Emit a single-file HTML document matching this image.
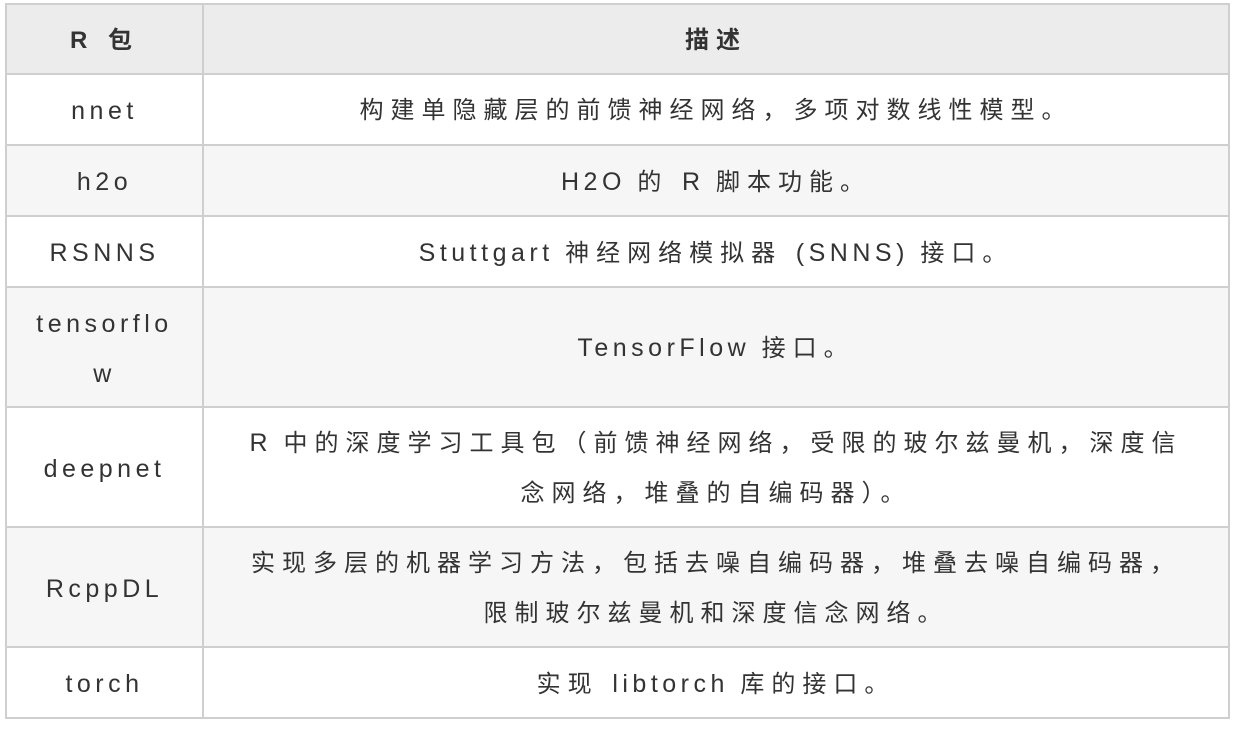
<!DOCTYPE html>
<html><head><meta charset="utf-8"><style>
html,body{margin:0;padding:0;background:#fff;width:1244px;height:734px;overflow:hidden}
table{position:absolute;left:5px;top:3px;border-collapse:collapse;table-layout:fixed;width:1225px;
font-family:"Liberation Sans","Noto Sans CJK SC",sans-serif;font-size:24px;color:#333;letter-spacing:7px}
td,th{border:2px solid #cfcfcf;text-align:center;vertical-align:middle;padding:3px 2px 0;line-height:50px;white-space:nowrap}
th{background:#ececec;font-weight:bold;height:65px}
tr.a td{background:#f6f6f6}
tr.s td{height:66px}
tr.t td{height:115px}
.l{letter-spacing:4.5px;font-size:25px}
</style></head><body>
<table>
<colgroup><col style="width:197px"><col></colgroup>
<tr><th>R 包</th><th>描述</th></tr>
<tr class="s"><td class="l">nnet</td><td>构建单隐藏层的前馈神经网络，多项对数线性模型。</td></tr>
<tr class="s a"><td class="l">h2o</td><td><span class="l">H2O </span>的 <span class="l">R </span>脚本功能。</td></tr>
<tr class="s"><td class="l">RSNNS</td><td><span class="l">Stuttgart </span>神经网络模拟器 <span class="l">(SNNS) </span>接口。</td></tr>
<tr class="t a"><td class="l">tensorflo<br>w</td><td><span class="l">TensorFlow </span>接口。</td></tr>
<tr class="t"><td class="l">deepnet</td><td><span class="l">R </span>中的深度学习工具包（前馈神经网络，受限的玻尔兹曼机，深度信<br>念网络，堆叠的自编码器）。</td></tr>
<tr class="t a"><td class="l">RcppDL</td><td>实现多层的机器学习方法，包括去噪自编码器，堆叠去噪自编码器，<br>限制玻尔兹曼机和深度信念网络。</td></tr>
<tr class="s"><td class="l">torch</td><td>实现 <span class="l">libtorch </span>库的接口。</td></tr>
</table>
</body></html>
